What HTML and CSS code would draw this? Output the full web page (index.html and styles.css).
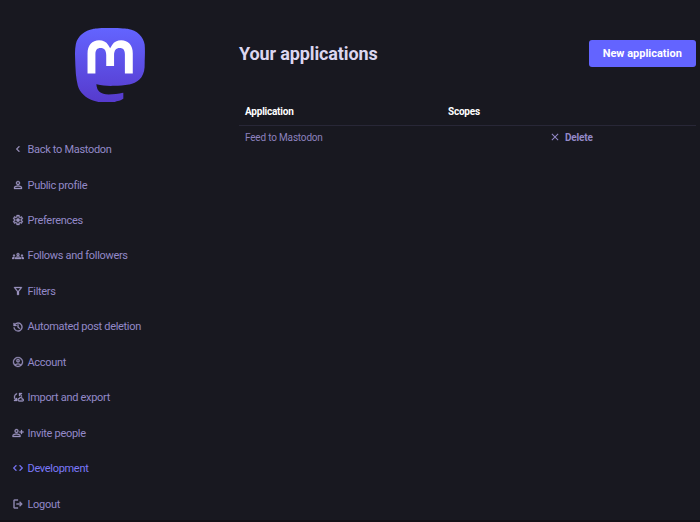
FILE: index.html
```html
<!DOCTYPE html>
<html lang="en">
<head>
<meta charset="utf-8">
<title>Your applications</title>
<link rel="stylesheet" href="styles.css">
</head>
<body>
<div class="layout">
  <aside class="sidebar">
    <a class="logo" href="#">
      <svg viewBox="0 0 74 78.2" preserveAspectRatio="none">
        <defs><linearGradient id="g" x1="0" y1="0" x2="0" y2="1"><stop offset="0" stop-color="#6364ff"/><stop offset="1" stop-color="#563acc"/></linearGradient></defs>
        <path fill="url(#g)" d="M73.8393 17.4898C72.6973 9.00165 65.2994 2.31235 56.5296 1.01614C55.05 0.797115 49.4441 0 36.4582 0H36.3612C23.3717 0 20.585 0.797115 19.1054 1.01614C10.5798 2.27644 2.79399 8.28712 0.904997 16.8758C-0.00358524 21.1056 -0.100549 25.7949 0.0682394 30.0965C0.308852 36.2651 0.355538 42.423 0.91577 48.5665C1.30307 52.6474 1.97872 56.6957 2.93763 60.6812C4.73325 68.042 12.0019 74.1676 19.1233 76.6666C26.7478 79.2728 34.9474 79.7055 42.8039 77.9162C43.6682 77.7151 44.5217 77.4817 45.3645 77.216C47.275 76.6092 49.5123 75.9305 51.1571 74.7385L51.2325 74.5948V68.6416L51.0171 68.4729C45.9835 69.675 40.8254 70.2777 35.6502 70.2682C26.7439 70.2682 24.3486 66.042 23.6626 64.2826C23.1113 62.762 22.7612 61.1759 22.6212 59.5646L22.8367 59.3886C27.7864 60.5826 32.8604 61.1853 37.9522 61.1839C39.1768 61.1839 40.3978 61.1839 41.6224 61.1516C46.7435 61.008 52.1411 60.7459 57.1796 59.7621L57.5387 59.6831C65.4861 58.157 73.0493 53.3672 73.8178 41.2381C73.8465 40.7606 73.9184 36.2364 73.9184 35.7409C73.9219 34.0569 74.4606 23.7949 73.8393 17.4898Z"/>
        <path fill="#fff" d="M61.2484 27.0263V48.114H52.8916V27.6475C52.8916 23.3388 51.096 21.1413 47.4437 21.1413C43.4287 21.1413 41.4177 23.7409 41.4177 28.8755V40.0782H33.1111V28.8755C33.1111 23.7409 31.0965 21.1413 27.0815 21.1413C23.4507 21.1413 21.6371 23.3388 21.6371 27.6475V48.114H13.284V27.0263C13.284 22.7176 14.3841 19.2946 16.5843 16.7572C18.8539 14.2259 21.8311 12.926 25.5264 12.926C29.8036 12.926 33.0357 14.5705 35.1905 17.8559L37.2698 21.346L39.3527 17.8559C41.5074 14.5705 44.7395 12.926 49.0095 12.926C52.7013 12.926 55.6784 14.2259 57.9553 16.7572C60.1531 19.2922 61.2508 22.7152 61.2484 27.0263Z"/>
      </svg>
    </a>
    <nav class="menu">
      <a href="#"><svg viewBox="0 0 24 24"><path d="M14 18l-6-6 6-6 1.4 1.4-4.6 4.6 4.6 4.6z"/></svg><span>Back to Mastodon</span></a>
      <a href="#"><svg viewBox="0 0 24 24"><path d="M12 12q-1.650 0-2.825-1.175T8 8t1.175-2.825T12 4t2.825 1.175T16 8t-1.175 2.825T12 12m-8 8v-2.800q0-.85.438-1.563T5.600 14.550q1.550-.775 3.150-1.163T12 13t3.250.388 3.150 1.162q.725.375 1.163 1.088T20 17.200V20zm2-2h12v-.800q0-.275-.137-.500t-.363-.350q-1.350-.675-2.725-1.013T12 15t-2.775.338T6.500 16.350q-.225.125-.363.350T6 17.200zm6-8q.825 0 1.413-.587T14 8t-.587-1.412T12 6t-1.412.588T10 8t.588 1.413T12 10"/></svg><span>Public profile</span></a>
      <a href="#"><svg viewBox="0 0 24 24"><path d="m9.250 22-.4-3.200q-.325-.125-.613-.300t-.562-.375L4.700 19.375l-2.750-4.750 2.575-1.950Q4.500 12.500 4.500 12.338v-.675q0-.163.025-.338L1.950 9.375l2.750-4.750 2.975 1.250q.275-.200.575-.375t.6-.300l.4-3.200h5.500l.4 3.200q.325.125.613.300t.562.375l2.975-1.250 2.750 4.750-2.575 1.950q.025.175.025.338v.675q0 .163-.050.338l2.575 1.950-2.750 4.750-2.950-1.250q-.275.200-.575.375t-.6.300l-.4 3.200zM11 20h1.975l.35-2.650q.775-.200 1.438-.588t1.212-.937l2.475 1.025.975-1.700-2.150-1.625q.125-.350.175-.737T17.500 12t-.050-.787-.175-.738l2.150-1.625-.975-1.700-2.475 1.050q-.550-.575-1.212-.962t-1.438-.588L13 4h-1.975l-.35 2.650q-.775.200-1.437.588t-1.213.937L5.550 7.150l-.975 1.700 2.150 1.600q-.125.375-.175.750t-.050.800q0 .400.050.775t.175.750l-2.150 1.625.975 1.700 2.475-1.050q.550.575 1.213.963t1.437.587zm1.050-4.500q1.450 0 2.475-1.025T15.550 12t-1.025-2.475T12.050 8.500q-1.475 0-2.487 1.025T8.550 12t1.013 2.475T12.050 15.500"/></svg><span>Preferences</span></a>
      <a href="#"><svg viewBox="0 0 24 24"><path d="M0 18v-1.600c0-1.500 1.600-2.400 4-2.400l1 .1a4 4 0 0 0-.5 2V18zm6 0v-1.700c0-2.100 2.500-3.300 6-3.300s6 1.200 6 3.300V18zm13.500 0v-1.900a4 4 0 0 0-.5-2l1-.1c2.400 0 4 .9 4 2.400V18zM8.200 16h7.600c-.6-.7-2.100-1-3.800-1s-3.200.3-3.800 1zM4 13a2 2 0 1 1 0-4 2 2 0 0 1 0 4zm16 0a2 2 0 1 1 0-4 2 2 0 0 1 0 4zm-8-1a3 3 0 1 1 0-6 3 3 0 0 1 0 6zm0-2a1 1 0 1 0 0-2 1 1 0 0 0 0 2z"/></svg><span>Follows and followers</span></a>
      <a href="#"><svg viewBox="0 0 24 24"><path d="M11 20q-.425 0-.713-.288T10 19v-6L4.200 5.600q-.375-.5-.113-1.050T5 4h14q.65 0 .913.550T19.800 5.600L14 13v6q0 .425-.288.712T13 20zm1-7.700L16.950 6h-9.900z"/></svg><span>Filters</span></a>
      <a href="#"><svg viewBox="0 0 24 24"><path d="M12 21q-3.450 0-6.012-2.287T3.050 13H5.100q.35 2.600 2.313 4.300T12 19q2.925 0 4.963-2.037T19 12t-2.037-4.962T12 5q-1.725 0-3.225.8T6.250 8H9v2H3V4h2v2.350q1.275-1.600 3.113-2.475T12 3q1.875 0 3.513.713t2.850 1.924 1.925 2.850T21 12t-.712 3.513-1.925 2.85-2.85 1.925T12 21m2.800-4.800L11 12.400V7h2v4.600l3.200 3.200z"/></svg><span>Automated post deletion</span></a>
      <a href="#"><svg viewBox="0 0 24 24"><path fill-rule="evenodd" d="M12 2a10 10 0 1 1 0 20 10 10 0 0 1 0-20zM5.850 17.100A9.900 9.900 0 0 1 12 15a9.900 9.900 0 0 1 6.150 2.100A8 8 0 1 0 5.850 17.100zM12 13a3.500 3.500 0 1 1 0-7 3.500 3.500 0 0 1 0 7zm0-2a1.500 1.500 0 1 0 0-3 1.500 1.500 0 0 0 0 3zm0 9a8 8 0 0 0 4.700-1.550 8 8 0 0 0-9.400 0A8 8 0 0 0 12 20z"/></svg><span>Account</span></a>
      <a href="#"><svg viewBox="0 0 24 24"><path d="M4 20v-2h2.750l-.4-.35Q5.050 16.500 4.525 15.025T4 12.050q0-2.775 1.663-4.937T10 4.250v2.100Q8.200 7 7.100 8.562T6 12.050q0 1.125.425 2.188T7.750 16.200l.25.250V14h2v6zm14-9c-.15-1.900-.8-2.900-1.750-3.800L16 6.950V10h-2V4h6v2h-2.750l.4.350C19 7.600 19.800 9 20 11zM14.500 21C12.600 21 11 19.500 11 17.600c0-1.700 1.200-3.100 2.900-3.400.7-1.400 2-2.200 3.600-2.200 2.100 0 3.700 1.400 4 3.500 1.500.1 2.500 1.200 2.500 2.700s-1.200 2.800-2.800 2.800zm0-2h6.700c.5 0 .8-.3.800-.8s-.3-.7-.8-.7h-1.700V16c0-1.200-.8-2-2-2s-2 .8-2 2h-1c-.9 0-1.500.7-1.500 1.500s.6 1.500 1.500 1.500z"/></svg><span>Import and export</span></a>
      <a href="#"><svg viewBox="0 0 24 24"><path d="M18 14v-3h-3V9h3V6h2v3h3v2h-3v3zM9 12a4 4 0 1 1 0-8 4 4 0 0 1 0 8zm-8 8v-2.800a3 3 0 0 1 1.600-2.650A14 14 0 0 1 9 13a14 14 0 0 1 6.400 1.550A3 3 0 0 1 17 17.200V20zm2-2h12v-.8a1 1 0 0 0-.5-.85A12 12 0 0 0 9 15a12 12 0 0 0-5.500 1.350 1 1 0 0 0-.5.85zm6-8a2 2 0 1 0 0-4 2 2 0 0 0 0 4z"/></svg><span>Invite people</span></a>
      <a class="active" href="#"><svg viewBox="0 0 24 24"><path d="m8 18-6-6 6-6 1.425 1.425L4.825 12.025 9.400 16.600zm8 0-1.425-1.425 4.600-4.600L14.600 7.400 16 6l6 6z"/></svg><span>Development</span></a>
      <a href="#"><svg viewBox="0 0 24 24"><path d="M5 21q-.825 0-1.412-.587T3 19V5q0-.825.588-1.412T5 3h7v2H5v14h7v2zm11-4-1.375-1.450 2.550-2.550H9v-2h8.175l-2.550-2.550L16 7l5 5z"/></svg><span>Logout</span></a>
    </nav>
  </aside>
  <main class="content">
    <header class="heading">
      <h1>Your applications</h1>
      <a class="button" href="#">New application</a>
    </header>
    <table class="table">
      <colgroup><col class="col-app"><col class="col-scopes"><col></colgroup>
      <thead><tr><th>Application</th><th>Scopes</th><th></th></tr></thead>
      <tbody><tr>
        <td><a href="#">Feed to Mastodon</a></td><td></td>
        <td><a class="delete" href="#"><svg viewBox="0 0 24 24"><path d="M6.400 19 5 17.600l5.600-5.600L5 6.400 6.400 5l5.600 5.600L17.600 5 19 6.400 13.400 12l5.600 5.600-1.400 1.400-5.600-5.600z"/></svg><span>Delete</span></a></td>
      </tr></tbody>
    </table>
  </main>
</div>
</body>
</html>
```
FILE: styles.css
```css
* { box-sizing: border-box; }
body {
  margin: 0;
  height: 522px;
  overflow: hidden;
  background: #181820;
  color: #fff;
  font-family: Roboto, sans-serif;
  border-bottom: 2px solid #141218;
}
a { color: inherit; text-decoration: none; }
svg { display: block; fill: currentColor; flex: none; }
.layout { display: flex; height: 520px; overflow: hidden; }
.sidebar { width: 220px; flex: none; padding-top: 28.4px; }
.logo { display: block; margin-left: 75.3px; height: 103.3px; }
.logo svg { width: 69.8px; height: 74px; }
.menu a {
  display: flex;
  align-items: center;
  gap: 4px;
  height: 35.45px;
  padding-left: 11.5px;
  color: #9389c8;
  font-size: 11px;
  letter-spacing: -0.31px;
}
.menu svg { width: 12px; height: 12px; color: #9a91bd; stroke: currentColor; stroke-width: 0.6px; }
.menu span { margin-top: 0.5px; }
.menu .active, .menu .active svg { color: #7b78fa; }
.content { flex: 1; padding: 40px 4.500px 0 19px; }
.heading { display: flex; justify-content: space-between; align-items: center; height: 27px; }
h1 { margin: 0; font-size: 18px; letter-spacing: -0.12px; line-height: 27px; font-weight: 700; color: #dcd6f0; }
.button {
  width: 106.5px;
  height: 26.5px;
  border-radius: 3px;
  background: #6364ff;
  font-size: 11px;
  font-weight: 700;
  line-height: 27.5px;
  text-align: center;
}
.table { width: 100%; margin-top: 31px; border-collapse: collapse; table-layout: fixed; font-size: 10px; letter-spacing: -0.22px; line-height: 14px; }
.col-app { width: 203px; }
.col-scopes { width: 101px; }
th, td { padding: 6px; text-align: left; }
th { height: 27px; padding: 7px 6px 5px; font-weight: 700; border-bottom: 1px solid #282737; }
td { height: 25px; padding: 4.500px 6px; color: #8c81be; letter-spacing: -0.18px; }
.delete { display: flex; align-items: center; gap: 4px; font-weight: 700; color: #9389c8; }
.delete svg { width: 12px; height: 12px; margin-top: -1px; }
```
